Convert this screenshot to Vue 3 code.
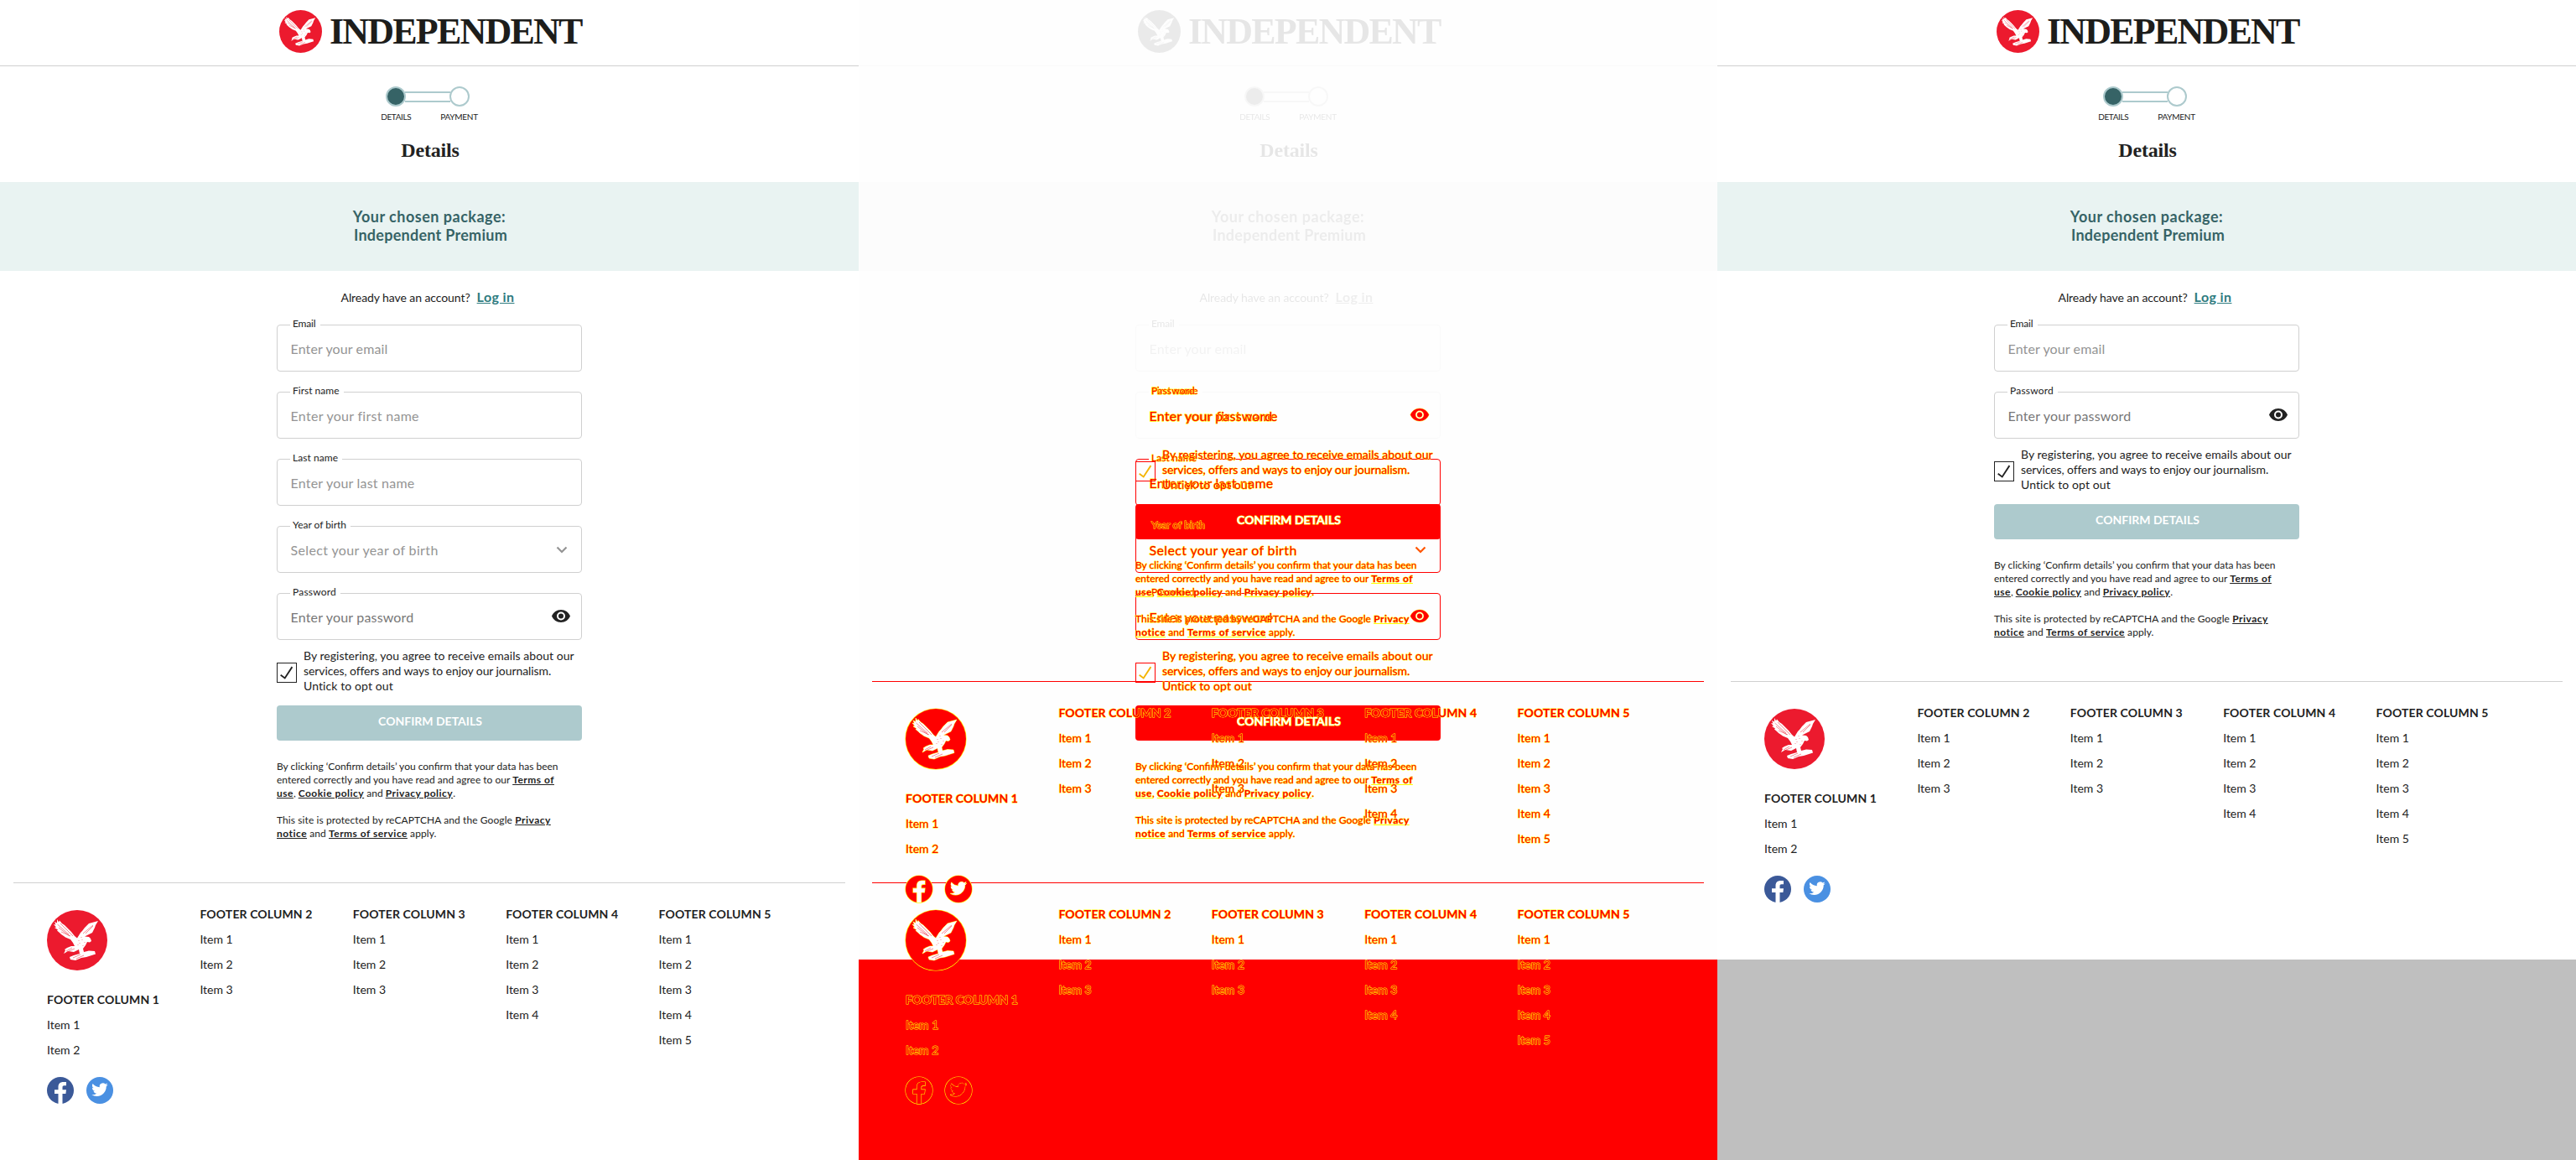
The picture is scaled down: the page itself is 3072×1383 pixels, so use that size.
<script setup>
const fields = {
  email: { label: 'Email', ls: -0.16, hint: 'Enter your email', hs: 0.12 },
  first: { label: 'First name', ls: 0.01, hint: 'Enter your first name', hs: 0.29 },
  last: { label: 'Last name', ls: 0.05, hint: 'Enter your last name', hs: 0.21 },
  year: { label: 'Year of birth', ls: -0.03, hint: 'Select your year of birth', hs: 0.36, icon: 'chevron' },
  password: { label: 'Password', ls: 0.2, hint: 'Enter your password', hs: 0.18, icon: 'eye' }
}
const full = [fields.email, fields.first, fields.last, fields.year, fields.password]
const short = [fields.email, fields.password]

// Each panel stacks one or more renderings of the registration page
const panels = [
  { kind: 'before', layers: [{ kind: 'plain', fields: full }] },
  {
    kind: 'compare',
    layers: [
      { kind: 'ghost', fields: full },
      { kind: 'diff diff-before', fields: full },
      { kind: 'diff diff-after', fields: short }
    ]
  },
  { kind: 'after', layers: [{ kind: 'plain', fields: short }] }
]
const columns = [2, 3, 3, 4, 5].map((items, i) => ({ title: 'FOOTER COLUMN ' + (i + 1), items }))
</script>

<template>
  <svg class="defs" width="0" height="0">
    <symbol id="eagle" viewBox="0 0 72 72">
      <path class="bird" d="M12 11L14 14.500L15 12.500L18 16L21 18L25 22L29 26L33 31L36 33.500L40 27L42 25L45 21L50 16L61 13L58 18L57 21L54 27L48 30L45 31.500L50 32L52 34L53 37L51 38.500L48 38L46 42L43 46L44 50L50 48.500L57 49L58 52.500L47 56L41 57L34 60L28 59L27 56L32 54L39 52L38 47L32 50L25 49L20 52L22 48L21 47L24 45L29 43L33 43L31 39L28 35L22 32.500L20 31L17 29L15 27L12 24.500L13 23.500L9 21L11 20.500L8 17L10.500 17.500L9 14L12 15.500Z" />
      <path class="feather" d="M12.500 17L26 29M14 21l13 10M17 26l11 5M16 16l15 15M43 28l12-10M46 28l9-9M23 49l7-4M26 49l7-3M31 57l9-4M35 58l9-4M38 36v1M42 35v1M39 39v1M45 38v1M43 42v1M37 41v1M41 32v1" />
    </symbol>
  </svg>
  <div class="board">
    <section v-for="panel in panels" :key="panel.kind" class="panel" :class="panel.kind">
      <div v-for="layer in panel.layers" :key="layer.kind" class="page" :class="layer.kind">
        <div class="intro">
          <header class="masthead">
            <svg class="brand" viewBox="0 0 72 72"><circle cx="36" cy="36" r="36" /><use href="#eagle" /></svg>
            <span class="wordmark">INDEPENDENT</span>
          </header>
          <div class="steps"><i class="dot done"></i><i class="link"></i><i class="dot"></i></div>
          <div class="step-names"><span class="one">DETAILS</span><span class="two">PAYMENT</span></div>
          <h1>Details</h1>
          <div class="package">
            <span class="chosen">Your chosen package:</span>
            <span class="plan">Independent Premium</span>
          </div>
        </div>
        <main>
          <p class="account"><span>Already have an account?</span><a>Log in</a></p>
          <div class="fields">
            <fieldset v-for="f in layer.fields" :key="f.label">
              <legend :style="{ letterSpacing: f.ls + 'px' }">{{ f.label }}</legend>
              <div class="input" :class="f.icon">
                <span :style="{ letterSpacing: f.hs + 'px' }">{{ f.hint }}</span>
                <svg v-if="f.icon === 'chevron'" class="chev" viewBox="0 0 14 9"><path d="M1.500 1.500L7 7l5.500-5.500" /></svg>
                <svg v-if="f.icon === 'eye'" class="eye" viewBox="1 4.500 22 15"><path fill-rule="evenodd" d="M12 4.500C7 4.500 2.730 7.610 1 12c1.730 4.390 6 7.500 11 7.500s9.270-3.110 11-7.500c-1.730-4.390-6-7.500-11-7.500zM12 17a5 5 0 110-10 5 5 0 010 10zm0-8a3 3 0 100 6 3 3 0 000-6z" /></svg>
              </div>
            </fieldset>
          </div>
          <div class="consent">
            <span class="box"><svg viewBox="0 0 24 24"><path d="M4 15l5.500 4L19 4.500" /></svg></span>
            <p>
              <span class="c1">By registering, you agree to receive emails about our</span><br />
              <span class="c2">services, offers and ways to enjoy our journalism.</span><br />
              <span class="c3">Untick to opt out</span>
            </p>
          </div>
          <div class="confirm"><span>CONFIRM DETAILS</span></div>
          <div class="legal">
            <p>By clicking ‘Confirm details’ you confirm that your data has been<br />entered correctly and you have read and agree to our <b>Terms of<br />use</b>, <b>Cookie policy</b> and <b>Privacy policy</b>.</p>
            <p>This site is protected by reCAPTCHA and the Google <b>Privacy<br />notice</b> and <b>Terms of service</b> apply.</p>
          </div>
        </main>
        <footer>
          <div v-for="(c, i) in columns" :key="c.title" class="col">
            <svg v-if="i === 0" class="emblem" viewBox="0 0 72 72"><circle cx="36" cy="36" r="36" /><use href="#eagle" /></svg>
            <h2>{{ c.title }}</h2>
            <span v-for="n in c.items" :key="n" class="item">Item {{ n }}</span>
            <div v-if="i === 0" class="social">
              <svg class="fb" viewBox="0 0 32 32"><circle cx="16" cy="16" r="16" /><path d="M13.500 32V20H9v-4.800h4.500V12c0-4 2.300-6 6-6H23v4.300h-2.300c-1.600 0-2.200.8-2.200 2.100v2.800H23l-.6 4.800h-3.900v12z" /></svg>
              <svg class="tw" viewBox="0 0 32 32"><circle cx="16" cy="16" r="16" /><path transform="translate(6.300 5.500) scale(.808)" d="M23.950 4.570a10 10 0 01-2.820.780 4.960 4.960 0 002.160-2.730 9.900 9.900 0 01-3.130 1.190 4.920 4.920 0 00-8.380 4.480A13.940 13.940 0 011.640 3.160a4.920 4.920 0 001.520 6.570 4.900 4.900 0 01-2.230-.610v.060a4.920 4.920 0 003.950 4.830 5 5 0 01-2.210.080 4.940 4.940 0 004.600 3.420A9.870 9.870 0 010 19.540a14 14 0 007.550 2.210c9.050 0 14-7.500 14-13.980 0-.210 0-.420-.020-.630a9.940 9.940 0 002.420-2.570z" /></svg>
            </div>
          </div>
        </footer>
      </div>
    </section>
  </div>
</template>

<style>
body { background: #fff; }
</style>

<style scoped>
.defs { display: block; }
.board { display: grid; grid-template-columns: repeat(3, 1024px); height: 1383px; overflow: hidden; }
.panel { display: grid; align-items: start; background: #fff; }
.panel.compare { background: linear-gradient(#fefefe 1144px, #f00 1144px); }
.panel.after { background: linear-gradient(#fff 1144px, #bfbfbf 1144px); }
.page { grid-area: 1 / 1; font-family: Lato, "Liberation Sans", sans-serif; font-size: 14px; line-height: 18px; color: #222; }
p, h1, h2 { margin: 0; }
svg { display: block; flex: none; }

.masthead { height: 75px; padding: 0 0 3px 3px; border-bottom: 1px solid #d0d0d0; display: flex; justify-content: center; align-items: center; gap: 9px; }
.brand { width: 51px; height: 51px; }
.brand circle, .emblem circle { fill: #ec1a2e; }
.bird { fill: #fff; }
.feather { fill: none; stroke: #ec1a2e; stroke-width: 0.5; }
.wordmark { width: 301px; font: 700 44px/50px "Liberation Serif", serif; letter-spacing: -1.800px; white-space: nowrap; color: #1d1d1b; }

.steps { display: flex; justify-content: center; align-items: center; padding-top: 24px; padding-right: 4px; }
.dot { box-sizing: border-box; width: 24px; height: 24px; border: 2px solid #adcacd; border-radius: 50%; }
.dot.done { background: #366366; }
.link { box-sizing: border-box; width: 54px; height: 13px; margin: 0 -1px; border: solid #adcacd; border-width: 2px 0; }
.step-names { display: flex; justify-content: center; font-size: 10px; line-height: 12px; padding-top: 6px; }
.one { width: 71px; letter-spacing: -0.390px; }
.two { letter-spacing: -0.270px; }
h1 { margin-top: 21px; height: 51px; font: 700 24px/26px "Liberation Serif", serif; letter-spacing: -0.200px; text-align: center; padding-left: 2px; }
.package { box-sizing: border-box; height: 106px; background: #e9f3f2; display: flex; flex-direction: column; align-items: center; justify-content: center; color: #366366; font-weight: 700; font-size: 18px; line-height: 22px; padding-bottom: 2px; }
.chosen { letter-spacing: 0.500px; }
.plan { letter-spacing: 0.260px; padding-left: 3px; }

main { width: 364px; margin: 0 auto; }
.account { height: 22px; line-height: 22px; margin: 20px 0 16px; display: flex; justify-content: center; align-items: baseline; gap: 8px; padding-right: 4px; }
.account span { letter-spacing: -0.080px; }
.account a { font-size: 16px; font-weight: 700; letter-spacing: 0.400px; color: #2f7c80; text-decoration: underline; }
.fields { display: flex; flex-direction: column; gap: 18px; }
fieldset { box-sizing: border-box; height: 62px; margin: 0; padding: 0 15px; border: 1px solid #d0d0d0; border-radius: 4px; min-width: 0; }
legend { height: 13px; line-height: 9px; font-size: 12px; padding: 0 5px 0 3px; }
.input { display: flex; justify-content: space-between; height: 44px; line-height: 44px; font-size: 16px; color: #949494; padding-left: 0.500px; }
.input.eye { color: #777; }
.chev { width: 14px; height: 9px; margin: 17px 1px 0 0; fill: none; stroke: #949494; stroke-width: 2.200; }
svg.eye { width: 22px; height: 15px; margin: 13px -2px 0 0; fill: #222; }
.consent { display: flex; gap: 8px; margin-top: 10px; }
.box { box-sizing: border-box; width: 24px; height: 24px; border: 1px solid #222; margin-top: 17px; }
.box svg { width: 22px; height: 22px; fill: none; stroke: #222; stroke-width: 2; }
.consent p { white-space: nowrap; }
.c1 { letter-spacing: 0.040px; }
.c2 { letter-spacing: -0.090px; }
.c3 { letter-spacing: 0.100px; }
.confirm { box-sizing: border-box; height: 42px; margin-top: 14px; padding: 10px 0 0 2px; text-align: center; background: #adcacd; border-radius: 4px; color: #fff; font-weight: 700; }
.legal { padding-top: 23px; font-size: 12px; line-height: 16px; white-space: nowrap; }
.legal p + p { margin-top: 16px; letter-spacing: 0.090px; }
b { text-decoration: underline; letter-spacing: 0.480px; }

footer { margin: 50px 16px 0; border-top: 1px solid #d0d0d0; padding: 32px 40px 0; display: grid; grid-template-columns: repeat(5, 182.400px); }
.col { display: flex; flex-direction: column; gap: 12px; margin-top: -4px; }
.emblem { width: 72px; height: 72px; margin: 4px 0 14px; }
h2 { font-size: 14px; line-height: 18px; font-weight: 700; letter-spacing: 0.120px; white-space: nowrap; }
.social { display: flex; gap: 15px; margin-top: 11px; }
.social svg { width: 32px; height: 32px; overflow: visible; }
.fb circle { fill: #3b5998; }
.tw circle { fill: #4a90e2; }
.social path { fill: #fff; }

/* Unchanged parts: washed out */
.ghost .intro, .ghost .account, .ghost .fields { filter: grayscale(1); opacity: 0.1; }
.ghost fieldset:nth-child(n + 3), .ghost fieldset:nth-child(2) .input,
.ghost .consent, .ghost .confirm, .ghost .legal, .ghost footer { visibility: hidden; }

/* Changed parts: red with yellow edges */
.diff .intro, .diff .account, .diff fieldset:nth-child(1) { visibility: hidden; }
.diff { color: #f00; -webkit-text-stroke: 1px #ff0; paint-order: stroke fill; }
.diff fieldset, .diff footer { border-color: #f00; }
.diff fieldset:nth-child(2) { border-color: transparent; }
.diff legend, .diff .input > *, .diff .consent, .diff .legal, .diff .col, .diff .confirm span { position: relative; z-index: 2; }
.diff .input { color: #f00; }
.diff .confirm { position: relative; background: #f00; }
.diff .confirm span { color: #fff; }
.diff .box { border-color: #f00; }
.diff .box svg { stroke: #f4b400; }
.diff .chev { stroke: #f50; }
.diff svg.eye { fill: #f00; stroke: #ff0; stroke-width: 0.8; overflow: visible; }
.diff .emblem { overflow: visible; }
.diff .emblem circle, .diff .social circle { fill: #f00; stroke: #ff0; stroke-width: 1.200; }
.diff .emblem use { stroke: #ff0; stroke-width: 0.8; }
.diff .social path { stroke: #ff0; stroke-width: 1.200; }
.diff-before .social path { fill: #f00; }
</style>
